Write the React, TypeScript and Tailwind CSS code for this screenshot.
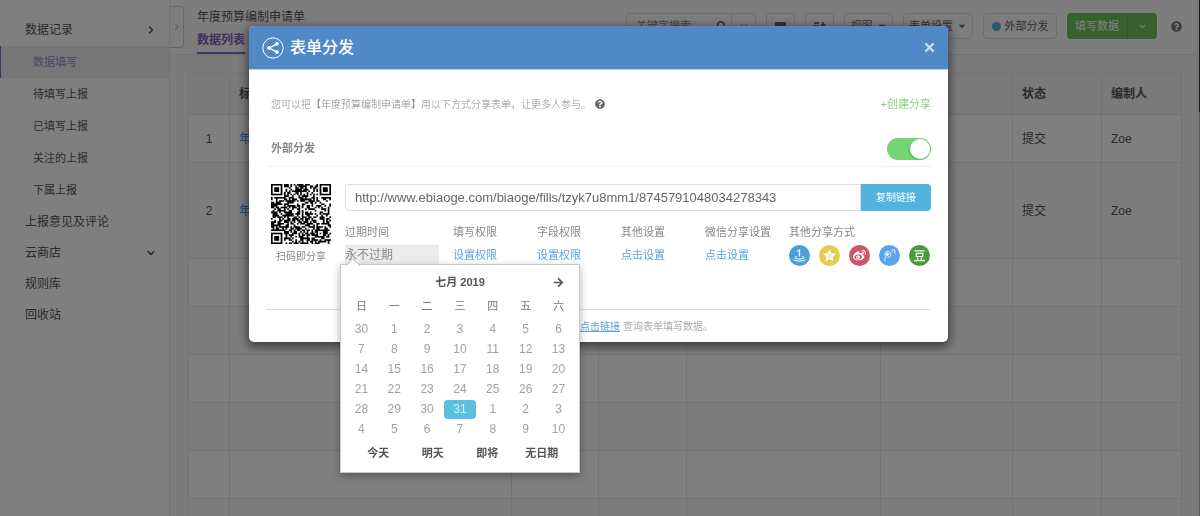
import React from "react";
import { FaArrowRight, FaCaretDown, FaQuestionCircle, FaSearch, FaWeibo } from "react-icons/fa";
import { ChevronDown, ChevronRight } from "lucide-react";

const QR_SIZE = 37;

function inFinder(x: number, y: number, ox: number, oy: number): boolean | null {
  const dx = x - ox;
  const dy = y - oy;
  if (dx < -1 || dy < -1 || dx > 7 || dy > 7) return null;
  if (dx === -1 || dy === -1 || dx === 7 || dy === 7) return false;
  const ring = Math.max(Math.abs(dx - 3), Math.abs(dy - 3));
  return ring !== 2;
}

function buildQrPath(): string {
  let seed = 20190731;
  let d = "";
  for (let y = 0; y < QR_SIZE; y++) {
    for (let x = 0; x < QR_SIZE; x++) {
      seed = (Math.imul(seed, 1664525) + 1013904223) >>> 0;
      let dark = (seed >>> 16) % 100 < 51;
      const finder =
        inFinder(x, y, 0, 0) ?? inFinder(x, y, QR_SIZE - 7, 0) ?? inFinder(x, y, 0, QR_SIZE - 7);
      if (finder !== null) dark = finder;
      else if (x === 6 || y === 6) dark = (x + y) % 2 === 0;
      else if (Math.abs(x - 30) <= 2 && Math.abs(y - 30) <= 2)
        dark = Math.max(Math.abs(x - 30), Math.abs(y - 30)) !== 1;
      if (dark) d += `M${x} ${y}h1v1h-1z`;
    }
  }
  return d;
}

const qrPath = buildQrPath();

const reports = ["数据填写", "待填写上报", "已填写上报", "关注的上报", "下属上报"];

function Sidebar() {
  return (
    <nav className="w-[170px] shrink-0 border-r border-[#e4e4e4] bg-white pt-[14px] text-xs text-[#555]">
      <a href="#records" className="flex h-8 items-center justify-between pr-3 pl-[25px]">
        数据记录
        <ChevronRight size={12} strokeWidth={3} />
      </a>
      <ul className="text-[11px]">
        {reports.map((name, i) => (
          <li key={name}>
            <a
              href="#report"
              className={
                i === 0
                  ? "flex h-8 items-center border-l border-[#8468c0] bg-[#ececec] pl-8 text-[#9d8ccc]"
                  : "flex h-8 items-center pl-[33px]"
              }
            >
              {name}
            </a>
          </li>
        ))}
      </ul>
      <a href="#comments" className="flex h-[31px] items-center pl-[25px]">上报意见及评论</a>
      <a href="#store" className="flex h-[31px] items-center justify-between pr-3 pl-[25px]">
        云商店
        <ChevronDown size={12} strokeWidth={3} />
      </a>
      <a href="#rules" className="flex h-[31px] items-center pl-[25px]">规则库</a>
      <a href="#trash" className="flex h-[31px] items-center pl-[25px]">回收站</a>
    </nav>
  );
}

const toolButton =
  "flex h-[26px] items-center justify-center gap-1 rounded-sm border border-[#dcdcdc] text-[11px] text-[#666]";

function Toolbar() {
  return (
    <div className="flex items-start gap-[10px] pt-[13px]">
      <div className="flex h-[26px] w-[130px] items-center rounded-sm border border-[#dcdcdc] text-[#666]">
        <input
          aria-label="关键字搜索"
          placeholder="关键字搜索"
          className="w-0 flex-1 bg-transparent pl-[9px] text-[11px] placeholder:text-[#888]"
        />
        <FaSearch size={10} className="mr-1.5 -scale-x-100" />
        <button aria-label="搜索选项" className="flex h-full w-6 items-center justify-center border-l border-[#dcdcdc]">
          <ChevronDown size={10} />
        </button>
      </div>
      <button aria-label="保存" className={`${toolButton} w-[29px]`}>
        <svg width="11" height="10" viewBox="0 0 11 10"><path d="M0 1h11v8H0z" fill="#666" /></svg>
      </button>
      <button aria-label="排序" className={`${toolButton} w-[29px]`}>
        <svg width="12" height="10" viewBox="0 0 12 10" stroke="#555" strokeWidth="1.5"><path d="M0 2h5M0 5h5M0 8h5M9 1v8M6.500 4h5" /></svg>
      </button>
      <button className={`${toolButton} w-[49px]`}>视图<FaCaretDown size={10} /></button>
      <button className={`${toolButton} w-[70px]`}>表单设置<FaCaretDown size={10} /></button>
      <button className={`${toolButton} w-[74px]`}>
        <span className="size-[9px] rounded-full bg-[#50b4e4]" />
        外部分发
      </button>
      <div className="flex h-[26px] rounded-sm bg-[#6fc45c] text-[11px] text-white">
        <button className="w-[61px] border-r border-[#62b04f]">填写数据</button>
        <button aria-label="更多填写选项" className="flex w-[29px] items-center justify-center"><ChevronDown size={9} strokeWidth={3} /></button>
      </div>
      <FaQuestionCircle size={11} className="mt-2 ml-1 text-[#777]" />
    </div>
  );
}

const cell = "border border-[#e6e6e6] px-[9px]";

function Row({ cells, height, shaded }: { cells: React.ReactNode[]; height: string; shaded: boolean }) {
  return (
    <tr className={`${height} ${shaded ? "bg-[#fbfbfb]" : "bg-white"}`}>
      {cells.map((c, i) => (
        <td key={i} className={i === 0 ? `${cell} text-center` : `${cell} text-left`}>{c}</td>
      ))}
    </tr>
  );
}

function RecordsTable() {
  const link = <a href="#record" className="text-[#2f8fe8]">年度</a>;
  const empty = ["", "", "", "", "", "", "", ""];
  return (
    <table className="w-full table-fixed border-collapse border border-[#dedede] text-xs text-[#555]">
      <colgroup>
        <col className="w-[41px]" />
        <col className="w-[282px]" />
        <col className="w-[87px]" />
        <col className="w-[88px]" />
        <col />
        <col className="w-[132px]" />
        <col className="w-[89px]" />
        <col className="w-[80px]" />
      </colgroup>
      <thead>
        <tr className="h-[41px] bg-[#f4f4f4]">
          {["", "标题", "", "", "", "", "状态", "编制人"].map((h, i) => (
            <th key={i} className={`${cell} text-left font-bold`}>{h}</th>
          ))}
        </tr>
      </thead>
      <tbody>
        <Row height="h-12" shaded={false} cells={["1", link, "", "", "", "", "提交", "Zoe"]} />
        <Row height="h-24" shaded cells={["2", link, "", "", "", "", "提交", "Zoe"]} />
        <Row height="h-12" shaded={false} cells={empty} />
        <Row height="h-12" shaded cells={empty} />
        <Row height="h-12" shaded={false} cells={empty} />
        <Row height="h-12" shaded cells={empty} />
        <Row height="h-12" shaded={false} cells={empty} />
        <Row height="h-12" shaded cells={empty} />
      </tbody>
    </table>
  );
}

const weekdays = ["日", "一", "二", "三", "四", "五", "六"];
const days = [
  30, 1, 2, 3, 4, 5, 6, 7, 8, 9, 10, 11, 12, 13, 14, 15, 16, 17, 18, 19, 20, 21, 22, 23, 24, 25, 26, 27,
  28, 29, 30, 31, 1, 2, 3, 4, 5, 6, 7, 8, 9, 10,
];
const weeks = [0, 1, 2, 3, 4, 5].map((w) => days.slice(w * 7, w * 7 + 7));

function Calendar() {
  return (
    <div className="absolute top-[39px] -left-[5px] z-10 w-60 border border-[#c8c8c8] bg-white px-1 pt-[5px] pb-[5px] text-[#555] shadow-[0_3px_8px_rgba(0,0,0,0.3)]">
      <svg className="absolute -top-[7px] left-[5px]" width="14" height="8" viewBox="0 0 14 8">
        <path d="M0 8 7 1l7 7" fill="#fff" stroke="#c8c8c8" />
      </svg>
      <div className="grid h-6 grid-cols-7 items-center text-[11px] font-bold">
        <span className="col-span-5 col-start-2 text-center">七月 2019</span>
        <button aria-label="下个月" className="flex justify-center"><FaArrowRight size={11} /></button>
      </div>
      <table className="w-full table-fixed text-center text-xs text-[#a2a2a2]">
        <thead>
          <tr className="h-[25px] text-[11px] text-[#777]">
            {weekdays.map((d) => <th key={d} className="p-0 font-normal">{d}</th>)}
          </tr>
        </thead>
        <tbody>
          {weeks.map((week, w) => (
            <tr key={w} className="h-5">
              {week.map((d, i) => (
                <td key={i} className="p-0">
                  <button
                    className={
                      w === 4 && d === 31
                        ? "block h-[19px] w-full rounded bg-[#5bbfe2] text-[#d5f0fa]"
                        : "block h-5 w-full"
                    }
                  >
                    {d}
                  </button>
                </td>
              ))}
            </tr>
          ))}
        </tbody>
      </table>
      <div className="grid h-7 grid-cols-4 items-center px-1.5 text-[11px] font-bold">
        <button>今天</button>
        <button>明天</button>
        <button>即将</button>
        <button>无日期</button>
      </div>
    </div>
  );
}

function ShareTargets() {
  const round = "flex size-[21px] items-center justify-center rounded-full text-white";
  return (
    <div className="flex gap-[9px]">
      <button aria-label="一键分享" className={`${round} bg-[#4a9fdc]`}>
        <svg width="15" height="15" viewBox="0 0 15 15" fill="none" stroke="#fff">
          <path d="M5.500 3.500 7.500 2v6.500" strokeWidth="1.300" />
          <path d="M5 8.500c-3 .6-3 2.500 2.500 2.500s5.500-1.900 2.500-2.500M1.500 11.500c2 2 10 2 12 0" />
        </svg>
      </button>
      <button aria-label="QQ空间" className={`${round} bg-[#e8cc50]`}>
        <svg width="15" height="15" viewBox="0 0 15 15">
          <path d="m7.500 1 1.900 4.200 4.600.5-3.400 3.100.9 4.500-4-2.300-4 2.300.9-4.500L1 5.700l4.600-.5z" fill="#fff" />
          <path d="M5.500 6.500h3.800L6 9.200h4" fill="none" stroke="#e8cc50" strokeWidth=".6" />
        </svg>
      </button>
      <button aria-label="新浪微博" className={`${round} bg-[#cc5468]`}><FaWeibo size={13} /></button>
      <button aria-label="腾讯微博" className={`${round} bg-[#5aa5ea]`}>
        <svg width="17" height="17" viewBox="0 0 17 17" fill="none" stroke="#fff" strokeWidth=".9">
          <path d="M4 14.500C3.500 11 4.500 9 6.500 7.500M4 8.500a3 3 0 1 1 2.500 2" />
          <circle cx="6.500" cy="7.300" r="1.100" fill="#fff" />
          <path d="M11.500 5.500a1.700 1.700 0 1 1 2.300-.2M12.800 4.200 15 7.500" strokeWidth=".7" />
        </svg>
      </button>
      <button aria-label="豆瓣" className={`${round} bg-[#4a9a40]`}>
        <svg width="13" height="13" viewBox="0 0 13 13" fill="none" stroke="#fff" strokeWidth="1.200">
          <path d="M1.500 1.800h10M3.200 4.300h6.600v3.200H3.200zM4.300 8.500l.8 2.500M8.700 8.500l-.8 2.500M1 11.600h11" />
        </svg>
      </button>
    </div>
  );
}

function Option({ title, action }: { title: string; action: string }) {
  return (
    <div className="w-[84px]">
      <div className="h-5 text-[11px] leading-[15px] text-[#888]">{title}</div>
      <button className="block h-5 text-[11px] text-[#5da3e2]">{action}</button>
    </div>
  );
}

function ShareDialog() {
  return (
    <section role="dialog" aria-labelledby="share-title" className="w-[699px] rounded-[5px] bg-white shadow-[0_3px_10px_2px_rgba(0,0,0,0.5)]">
      <header className="flex h-11 items-center rounded-t-[5px] border-b border-[#bdd0e8] bg-[#5189c6] px-[13px] text-white">
        <svg width="22" height="22" viewBox="0 0 22 22" fill="#fff" stroke="#fff">
          <circle cx="11" cy="11" r="10.200" fill="none" />
          <path d="M15 6.800 7 11l8 4.200" fill="none" strokeWidth="1.300" />
          <circle cx="15" cy="6.800" r="1.400" />
          <circle cx="7" cy="11" r="1.400" />
          <circle cx="15" cy="15.200" r="1.400" />
        </svg>
        <h2 id="share-title" className="ml-1.5 flex-1 text-base font-medium">表单分发</h2>
        <button aria-label="关闭" className="text-[#cddff2]">
          <svg width="11" height="11" viewBox="0 0 11 11" stroke="currentColor" strokeWidth="2.300"><path d="m1.500 1.500 8 8m0-8-8 8" /></svg>
        </button>
      </header>

      <div className="px-[17px] pt-6 text-[11px] text-[#888]">
        <div className="flex h-5 items-center gap-1 pl-[5px] font-light">
          <p className="text-[10px]">您可以把【年度预算编制申请单】用以下方式分享表单，让更多人参与。</p>
          <FaQuestionCircle size={10} className="text-[#666]" />
          <button className="ml-auto font-normal text-[#8bcf7d]">+创建分享</button>
        </div>
        <div className="mt-[17px] flex h-9 items-center justify-between border-b border-[#eee] pl-[5px]">
          <label htmlFor="external" className="font-bold">外部分发</label>
          <input
            id="external"
            type="checkbox"
            defaultChecked
            className="h-[22px] w-11 appearance-none rounded-full bg-[#ccc] p-px before:block before:size-5 before:rounded-full before:bg-white checked:bg-[#76d572] checked:before:ml-[22px] checked:before:shadow-[-1px_1px_2px_rgba(0,0,0,0.2)]"
          />
        </div>

        <div className="mt-[17px] flex gap-[14px] pl-[5px]">
          <div className="w-[60px] shrink-0">
            <svg width="60" height="60" viewBox="0 0 37 37" role="img" aria-label="二维码" shapeRendering="geometricPrecision">
              <path d={qrPath} fill="#000" stroke="#000" strokeWidth=".06" />
            </svg>
            <p className="mt-[5px] text-center text-[10px] leading-4 whitespace-nowrap">扫码即分享</p>
          </div>
          <div className="min-w-0 flex-1">
            <div className="flex h-[27px]">
              <input
                aria-label="分享链接"
                readOnly
                value="http://www.ebiaoge.com/biaoge/fills/tzyk7u8mm1/8745791048034278343"
                className="min-w-0 flex-1 rounded-l-sm border border-[#ddd] px-[9px] text-[13px] text-[#666]"
              />
              <button className="w-[70px] rounded-r-sm bg-[#52b3df] text-[10px] text-white">复制链接</button>
            </div>
            <div className="mt-[14px] flex">
              <div className="relative mr-[14px] w-[94px]">
                <label htmlFor="expires" className="block h-5 leading-[15px]">过期时间</label>
                <input id="expires" readOnly value="永不过期" className="block h-5 w-full bg-[#ececec] pb-[3px] text-xs text-[#888]" />
                <Calendar />
              </div>
              <Option title="填写权限" action="设置权限" />
              <Option title="字段权限" action="设置权限" />
              <Option title="其他设置" action="点击设置" />
              <Option title="微信分享设置" action="点击设置" />
              <div>
                <div className="h-5 text-[11px] leading-[15px] text-[#888]">其他分享方式</div>
                <ShareTargets />
              </div>
            </div>
          </div>
        </div>

        <p className="mt-[43px] flex h-[33px] items-center justify-center border-t border-[#ddd] pl-24 text-[10px] whitespace-pre text-[#aaa]">
          <a href="#query" className="text-[#5da3e2] underline">点击链接</a> 查询表单填写数据。
        </p>
      </div>
    </section>
  );
}

export default function App() {
  return (
    <div className="font-['Liberation_Sans','Noto_Sans_CJK_SC',sans-serif]">
      <div className="flex h-screen overflow-hidden bg-[#f6f6f6]">
        <Sidebar />
        <main className="flex min-w-0 flex-1 flex-col">
          <header className="flex h-[55px] items-start border-b border-[#e6e6e6] bg-[#fbfbfb] pr-[15px]">
            <button aria-label="收起侧栏" className="mt-[6px] flex h-[42px] w-[14px] items-center justify-center rounded-r-sm border border-l-0 border-[#ccc] text-[#888]">
              <ChevronRight size={10} />
            </button>
            <div className="ml-[13px] flex-1 pt-[9px] text-xs text-[#555]">
              <h1 className="leading-4">年度预算编制申请单</h1>
              <a href="#list" className="mt-[3px] inline-block h-[26px] border-b-2 border-[#8468c0] pt-1 leading-4 font-bold text-[#7c62b8]">数据列表</a>
            </div>
            <Toolbar />
          </header>
          <div className="pt-[18px] pr-[15px] pl-[18px]">
            <RecordsTable />
          </div>
        </main>
        <div className="w-[3px] border-r border-[#bbb] bg-[#eee]">
          <div className="ml-[2px] h-28 w-px bg-[#334]" />
        </div>
      </div>
      <div className="fixed inset-0 flex items-start justify-center bg-black/50 pt-[26px] pr-[3px]">
        <ShareDialog />
      </div>
    </div>
  );
}
